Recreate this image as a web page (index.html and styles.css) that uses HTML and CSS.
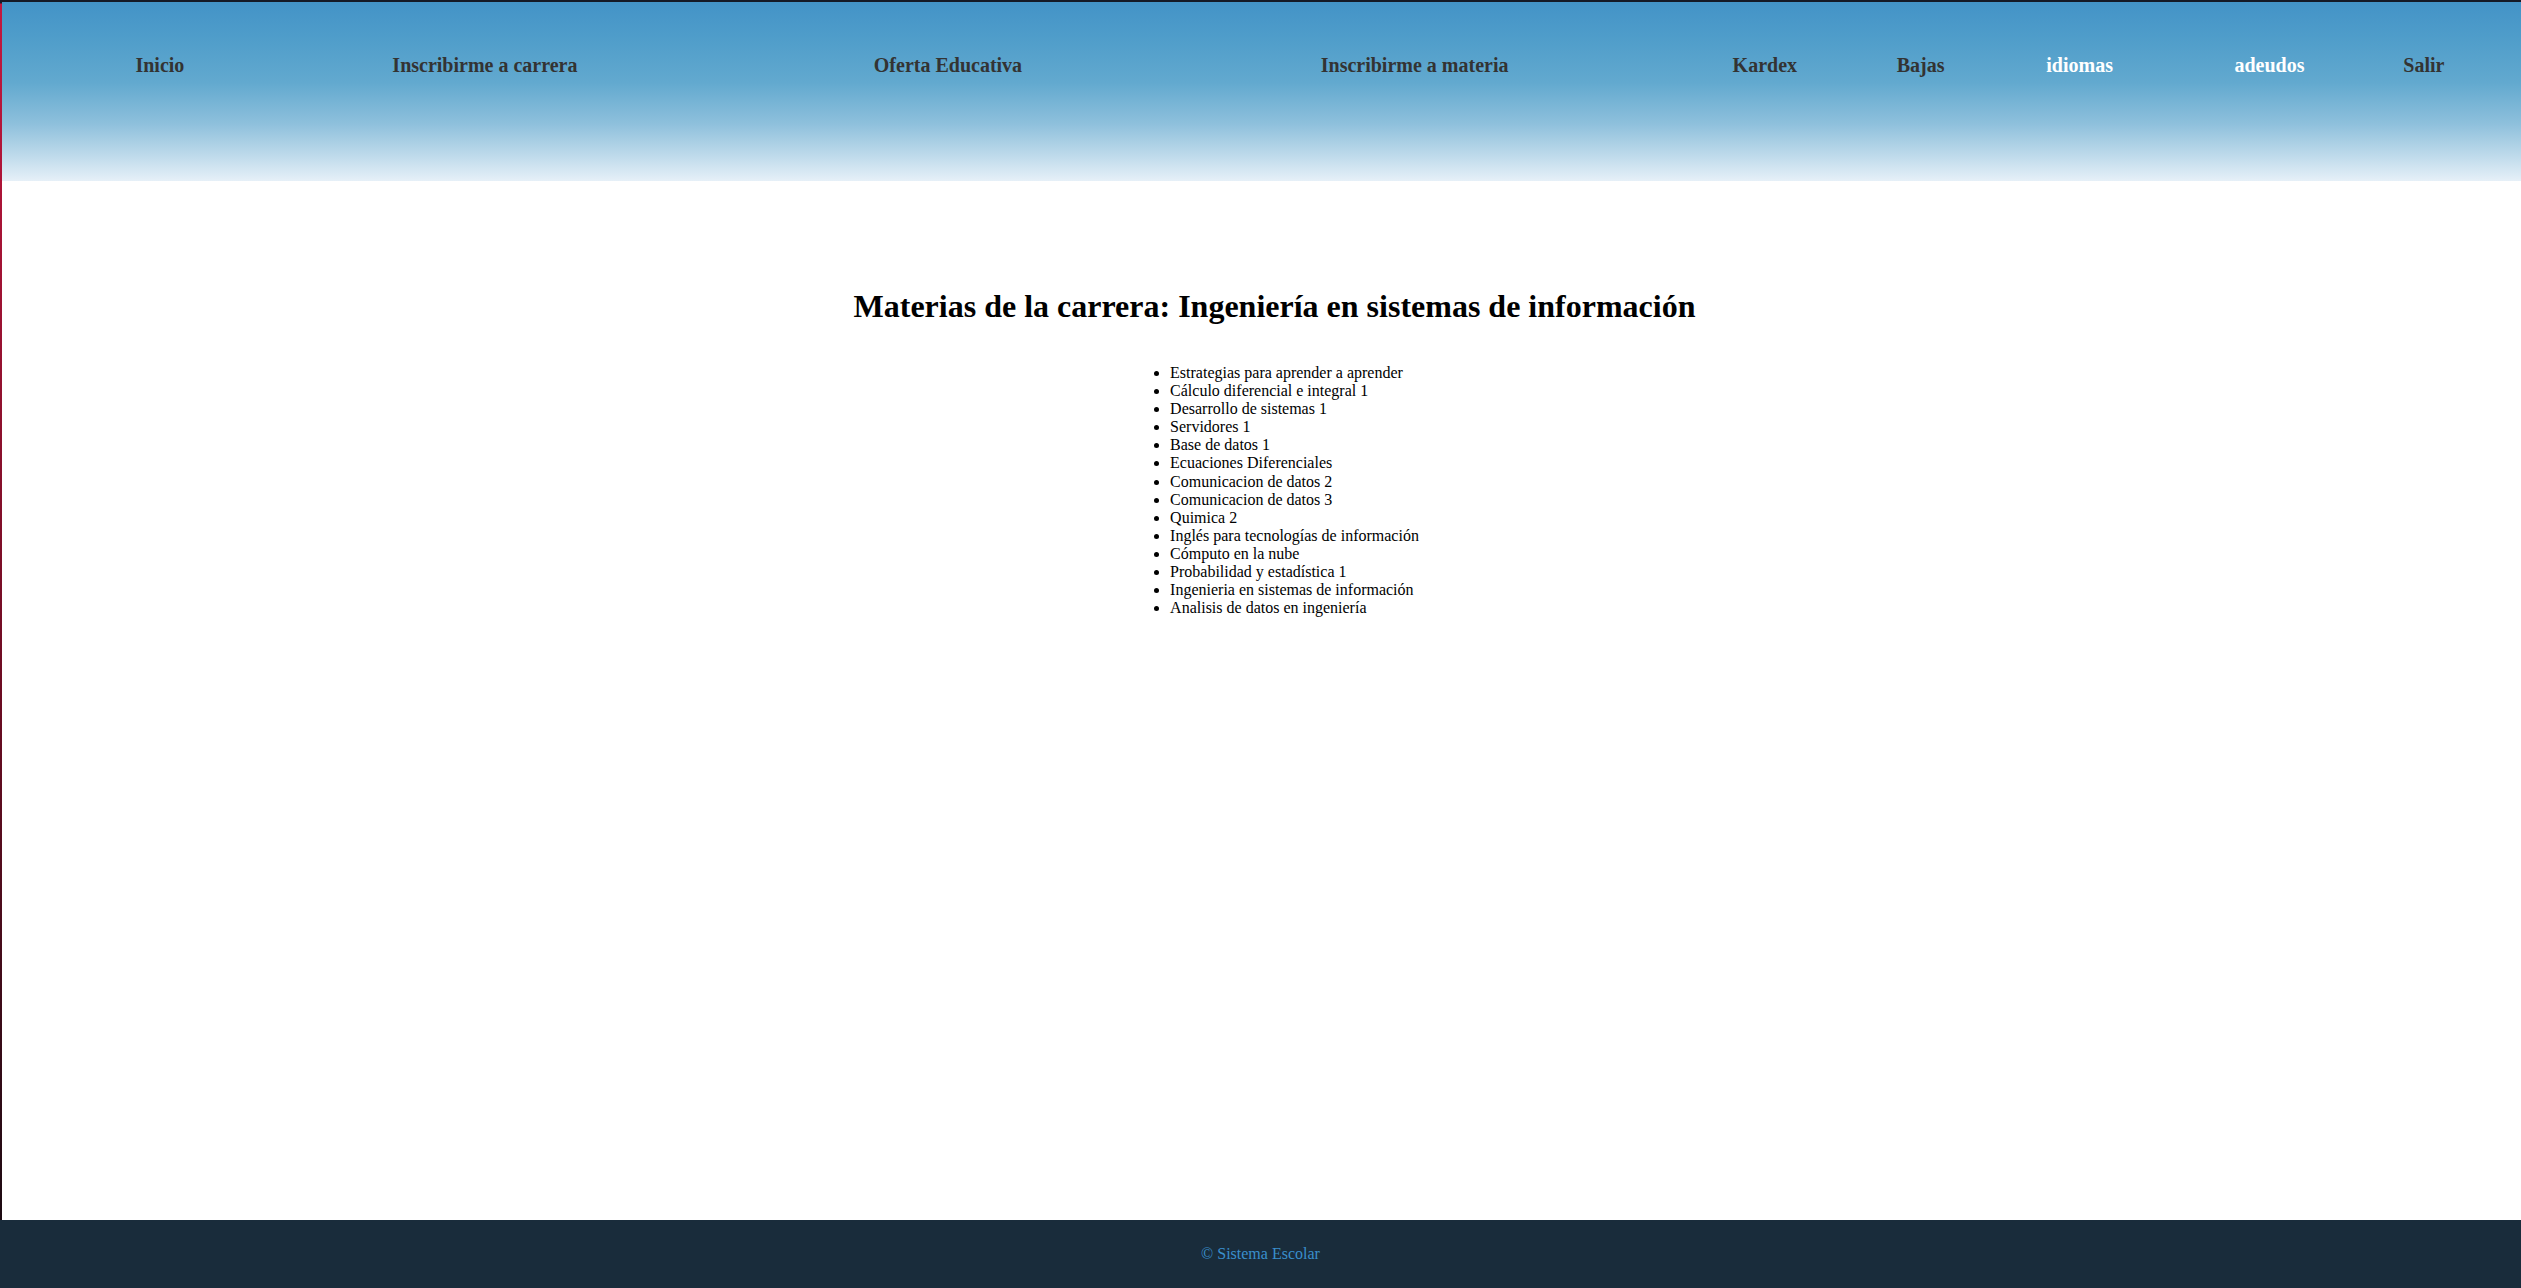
FILE: index.html
```html
<!DOCTYPE html>
<html lang="es">
<head>
<meta charset="utf-8">
<title>Sistema Escolar</title>
<link rel="stylesheet" href="styles.css">
</head>
<body>
<div class="page">
  <header class="site-header">
    <nav>
      <ul class="menu">
        <li><a href="#">Inicio</a></li>
        <li><a href="#">Inscribirme a carrera</a></li>
        <li><a href="#">Oferta Educativa</a></li>
        <li><a href="#">Inscribirme a materia</a></li>
        <li><a href="#">Kardex</a></li>
        <li><a href="#">Bajas</a></li>
        <li><a href="#" class="light">idiomas</a></li>
        <li><a href="#" class="light">adeudos</a></li>
        <li><a href="#">Salir</a></li>
      </ul>
    </nav>
  </header>
  <main class="content">
    <h1 class="title">Materias de la carrera: Ingeniería en sistemas de información</h1>
    <div class="list-wrap">
      <ul class="subjects">
        <li>Estrategias para aprender a aprender</li>
        <li>Cálculo diferencial e integral 1</li>
        <li>Desarrollo de sistemas 1</li>
        <li>Servidores 1</li>
        <li>Base de datos 1</li>
        <li>Ecuaciones Diferenciales</li>
        <li>Comunicacion de datos 2</li>
        <li>Comunicacion de datos 3</li>
        <li>Quimica 2</li>
        <li>Inglés para tecnologías de información</li>
        <li>Cómputo en la nube</li>
        <li>Probabilidad y estadística 1</li>
        <li>Ingenieria en sistemas de información</li>
        <li>Analisis de datos en ingeniería</li>
      </ul>
    </div>
  </main>
  <footer class="site-footer">
    <p>© Sistema Escolar</p>
  </footer>
</div>
</body>
</html>
```

FILE: styles.css
```css
html, body {
  margin: 0;
  padding: 0;
  height: 100%;
}

body {
  font-family: "Liberation Serif", "Times New Roman", serif;
  background: #ffffff;
  color: #000;
}

.page {
  box-sizing: border-box;
  min-height: 100%;
  display: flex;
  flex-direction: column;
  border-top: 2px solid #151a27;
  border-left: 2px solid #8a0f2a;
  border-image: linear-gradient(to bottom, #151a27 0, #151a27 2px, #c3173f 3px, #6a0c22 55%, #120a10 100%) 1;
}

.site-header {
  height: 179px;
  box-sizing: border-box;
  padding-top: 52px;
  background: linear-gradient(to bottom, #4393c7 0%, #4f9dca 20%, #62a9cf 45%, #8ec0dc 68%, #bcd9ea 85%, #e6f0f8 100%);
}

.menu {
  display: table;
  table-layout: auto;
  width: calc(100% - 130px);
  margin: 0 40px 0 90px;
  padding: 0;
  list-style: none;
}

.menu li {
  display: table-cell;
  text-align: center;
  padding: 0;
  white-space: nowrap;
}

.menu a {
  font-family: "Liberation Serif", "Times New Roman", serif;
  font-weight: bold;
  font-size: 20px;
  color: #333333;
  text-decoration: none;
}

.menu a.light {
  color: #ffffff;
}

.content {
  flex: 1;
  padding: 86px 0 0 26px;
  text-align: center;
}

.title {
  font-size: 32px;
  font-weight: bold;
  margin: 21px 0 21px;
}

.list-wrap {
  text-align: center;
}

.subjects {
  display: inline-block;
  text-align: left;
  margin: 18px 0;
  padding-left: 40px;
  font-size: 16px;
  line-height: 18.1px;
  list-style: disc;
}

.site-footer {
  height: 68px;
  background: #192c3b;
  display: flex;
  align-items: center;
  justify-content: center;
  margin-left: -2px;
}

.site-footer p {
  margin: 0;
  font-size: 16px;
  color: #3a8fcc;
}
```
